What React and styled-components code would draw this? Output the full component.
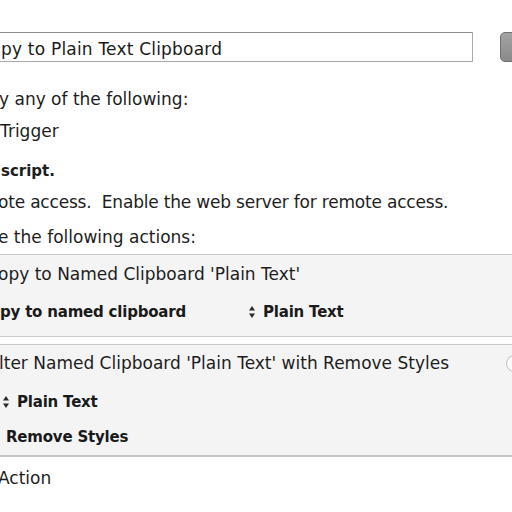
import React from "react";
import styled, { createGlobalStyle } from "styled-components";

const GlobalStyle = createGlobalStyle`
  html, body {
    margin: 0;
    padding: 0;
    background: #ffffff;
  }
  body {
    font-family: "DejaVu Sans", "Liberation Sans", sans-serif;
    color: #1d1d1d;
  }
`;

const Page = styled.div`
  width: 512px;
  height: 512px;
  overflow: hidden;
  background: #ffffff;
  padding-top: 32px;
  box-sizing: border-box;
`;

const NameRow = styled.div`
  display: flex;
  align-items: center;
  gap: 27px;
`;

const NameField = styled.div`
  flex: 0 0 auto;
  width: 474px;
  height: 30px;
  margin-left: -1px;
  box-sizing: border-box;
  border: 1px solid #a9a9a9;
  border-top-color: #8e8e8e;
  background: #ffffff;
  display: flex;
  align-items: center;
  font-size: 17px;
  letter-spacing: 0.2px;
  color: #1a1a1a;
  white-space: nowrap;
`;

const FieldText = styled.span`
  margin-left: 1px;
  padding-top: 3px;
`;

const GrayButton = styled.div`
  flex: 0 0 auto;
  width: 60px;
  height: 30px;
  box-sizing: border-box;
  border-radius: 5px;
  border: 1px solid #6f6f6f;
  background: linear-gradient(#a3a3a3, #8a8a8a);
`;

const Line = styled.div`
  height: 20px;
  line-height: 20px;
  font-size: ${({ $bold }) => ($bold ? 15 : 17)}px;
  letter-spacing: ${({ $tight }) => ($tight ? -0.2 : 0)}px;
  white-space: nowrap;
  margin-top: ${({ $top }) => $top}px;
  margin-left: ${({ $shift }) => $shift || 0}px;
  font-weight: ${({ $bold }) => ($bold ? 700 : 400)};
  color: #1d1d1d;
`;

const ActionBox = styled.div`
  background: #f4f4f4;
  border-top: 1px solid #c9c9c9;
  border-bottom: ${({ $thick }) => ($thick ? "2px solid #c6c6c6" : "1px solid #cdcdcd")};
  margin-top: ${({ $top }) => $top}px;
  padding-top: ${({ $padTop }) => $padTop}px;
  padding-bottom: ${({ $padBottom }) => $padBottom}px;
`;

const TitleRow = styled.div`
  display: flex;
  align-items: center;
  justify-content: space-between;
  height: 20px;
`;

const Title = styled.div`
  font-size: 17px;
  line-height: 20px;
  white-space: nowrap;
  margin-left: ${({ $shift }) => $shift || 0}px;
  color: #1d1d1d;
`;

const CircleButton = styled.div`
  width: 17px;
  height: 17px;
  box-sizing: border-box;
  border-radius: 50%;
  border: 1px solid #bdbdbd;
  background: #fafafa;
  margin-right: -11px;
  flex: 0 0 auto;
`;

const ParamRow = styled.div`
  display: flex;
  align-items: center;
  height: 20px;
  line-height: 20px;
  font-size: 15px;
  letter-spacing: -0.2px;
  font-weight: 700;
  white-space: nowrap;
  margin-top: ${({ $top }) => $top || 0}px;
  margin-left: ${({ $shift }) => $shift || 0}px;
  color: #1a1a1a;
`;

const ParamLabel = styled.span`
  width: ${({ $width }) => $width}px;
  flex: 0 0 auto;
`;

const Popup = styled.span`
  display: inline-flex;
  align-items: center;
  gap: 7px;
`;

const Arrows = () => (
  <svg width="8" height="14" viewBox="0 0 8 14">
    <path d="M4 1 L7 5.5 L1 5.5 Z" fill="#2a2a2a" />
    <path d="M4 13 L7 8.5 L1 8.5 Z" fill="#2a2a2a" />
  </svg>
);

export default function App() {
  return (
    <>
      <GlobalStyle />
      <Page>
        <NameRow>
          <NameField>
            <FieldText>py to Plain Text Clipboard</FieldText>
          </NameField>
          <GrayButton />
        </NameRow>

        <Line $top={27} $shift={-1}>y any of the following:</Line>
        <Line $top={12}>Trigger</Line>
        <Line $top={20} $bold $shift={1}>script.</Line>
        <Line $top={11} $shift={-2} $tight>ote access.&nbsp; Enable the web server for remote access.</Line>
        <Line $top={15} $shift={-2}>e the following actions:</Line>

        <ActionBox $top={7} $padTop={9} $padBottom={14}>
          <TitleRow>
            <Title $shift={-2}>opy to Named Clipboard 'Plain Text'</Title>
          </TitleRow>
          <ParamRow $top={18}>
            <ParamLabel $width={248}>py to named clipboard</ParamLabel>
            <Popup>
              <Arrows />
              Plain Text
            </Popup>
          </ParamRow>
        </ActionBox>

        <ActionBox $top={7} $thick $padTop={8} $padBottom={8}>
          <TitleRow>
            <Title $shift={-1}>lter Named Clipboard 'Plain Text' with Remove Styles</Title>
            <CircleButton />
          </TitleRow>
          <ParamRow $top={19} $shift={2}>
            <Popup>
              <Arrows />
              Plain Text
            </Popup>
          </ParamRow>
          <ParamRow $top={15} $shift={6}>Remove Styles</ParamRow>
        </ActionBox>

        <Line $top={11} $shift={-2}>Action</Line>
      </Page>
    </>
  );
}
